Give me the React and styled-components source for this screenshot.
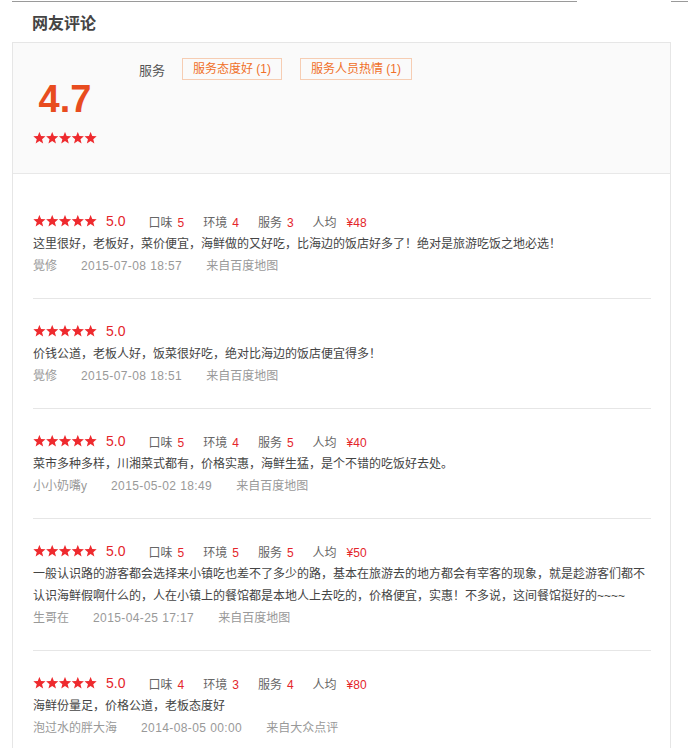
import React from "react";
import styled, { createGlobalStyle } from "styled-components";

const GlobalStyle = createGlobalStyle`
body {
  margin: 0;
  background: #ffffff;
  font-family: "Liberation Sans", "Noto Sans CJK SC", sans-serif;
  color: #333;
}
`

const Page = styled.div`
width: 688px;
height: 748px;
overflow: hidden;
`

const TopRules = styled.div`
display: flex;
justify-content: space-between;
padding: 1px 0 0 12px;
`

const Rule = styled.div`
height: 1px;
width: ${props => props.w}px;
background: #9a9a9a;
`

const Title = styled.h3`
margin: 0;
padding: 12px 0 0 32px;
height: 28px;
font-size: 16px;
line-height: 20px;
font-weight: bold;
color: #444;
`

const Panel = styled.div`
margin-left: 12px;
width: 657px;
border-left: 1px solid #e6e6e6;
border-right: 1px solid #e6e6e6;
border-top: 1px solid #e6e6e6;
`

const Summary = styled.div`
display: flex;
height: 130px;
background: #fafafa;
border-bottom: 1px solid #e8e8e8;
`

const ScoreBox = styled.div`
display: flex;
flex-direction: column;
align-items: center;
width: 64px;
margin-left: 20px;
`

const Score = styled.div`
margin-top: 36px;
font-size: 38px;
line-height: 40px;
font-weight: bold;
color: #e84c1f;
`

const ScoreStars = styled.div`
margin-top: 13px;
display: flex;
`

const TagRow = styled.div`
display: flex;
align-items: center;
margin: 15px 0 0 42px;
height: 22px;
`

const TagLabel = styled.span`
font-size: 13px;
color: #555;
margin-right: 17px;
`

const Tag = styled.span`
display: inline-block;
height: 20px;
line-height: 20px;
padding: 0 10px;
border: 1px solid #f6cdb3;
font-size: 12px;
color: #f07028;
margin-right: 18px;
`

const ReviewList = styled.div`
padding: 15px 19px 0 20px;
`

const Review = styled.div`
padding: 20px 0 21px;
border-bottom: ${props => props.last ? "none" : "1px solid #e6e6e6"};
`

const RatingRow = styled.div`
display: flex;
align-items: center;
height: 24px;
`

const Overall = styled.span`
margin-left: 9px;
font-size: 14px;
color: #e4252b;
`

const Details = styled.div`
display: flex;
margin-left: 23px;
font-size: 12px;
color: #666;
`

const Detail = styled.span`
margin-right: 19px;
b {
  font-weight: normal;
  color: #e4252b;
  margin-left: ${props => props.price ? 10 : 5}px;
}
`

const Content = styled.p`
margin: 0;
font-size: 12px;
line-height: 22px;
color: #444;
`

const Meta = styled.div`
display: flex;
gap: 24px;
font-size: 12px;
line-height: 22px;
color: #999;
`

const Time = styled.span`
letter-spacing: 0.4px;
`

const Stars = ({ size = 12.8, color = "#ee2a2e" }) => {
    const pts = (cx) => {
        const out = [];
        for (let i = 0; i < 10; i++) {
            const r = i % 2 === 0 ? size / 2 : size / 4.6;
            const a = -Math.PI / 2 + (i * Math.PI) / 5;
            out.push(`${(cx + r * Math.cos(a)).toFixed(2)},${(6.3 + r * Math.sin(a)).toFixed(2)}`);
        }
        return out.join(" ");
    };
    return (
        <svg width={size * 5} height="12" viewBox={`0 0 ${size * 5} 12`}>
            {[0, 1, 2, 3, 4].map(i => (
                <polygon key={i} points={pts(size / 2 + i * size)} fill={color} />
            ))}
        </svg>
    );
};

const reviews = [
    {
        details: [["口味", "5"], ["环境", "4"], ["服务", "3"]],
        price: "¥48",
        text: "这里很好，老板好，菜价便宜，海鲜做的又好吃，比海边的饭店好多了！绝对是旅游吃饭之地必选！",
        name: "覺修",
        time: "2015-07-08 18:57",
        from: "来自百度地图"
    },
    {
        details: null,
        text: "价钱公道，老板人好，饭菜很好吃，绝对比海边的饭店便宜得多！",
        name: "覺修",
        time: "2015-07-08 18:51",
        from: "来自百度地图"
    },
    {
        details: [["口味", "5"], ["环境", "4"], ["服务", "5"]],
        price: "¥40",
        text: "菜市多种多样，川湘菜式都有，价格实惠，海鲜生猛，是个不错的吃饭好去处。",
        name: "小小奶嘴y",
        time: "2015-05-02 18:49",
        from: "来自百度地图"
    },
    {
        details: [["口味", "5"], ["环境", "5"], ["服务", "5"]],
        price: "¥50",
        text: "一般认识路的游客都会选择来小镇吃也差不了多少的路，基本在旅游去的地方都会有宰客的现象，就是趁游客们都不认识海鲜假啊什么的，人在小镇上的餐馆都是本地人上去吃的，价格便宜，实惠！不多说，这间餐馆挺好的~~~~",
        name: "生哥在",
        time: "2015-04-25 17:17",
        from: "来自百度地图"
    },
    {
        details: [["口味", "4"], ["环境", "3"], ["服务", "4"]],
        price: "¥80",
        text: "海鲜份量足，价格公道，老板态度好",
        name: "泡过水的胖大海",
        time: "2014-08-05 00:00",
        from: "来自大众点评"
    }
];

const App = () => {
    return (
        <Page>
            <GlobalStyle />
            <TopRules>
                <Rule w={565} />
                <Rule w={17} />
            </TopRules>
            <Title>网友评论</Title>
            <Panel>
                <Summary>
                    <ScoreBox>
                        <Score>4.7</Score>
                        <ScoreStars><Stars /></ScoreStars>
                    </ScoreBox>
                    <TagRow>
                        <TagLabel>服务</TagLabel>
                        <Tag>服务态度好 (1)</Tag>
                        <Tag>服务人员热情 (1)</Tag>
                    </TagRow>
                </Summary>
                <ReviewList>
                    {reviews.map((r, i) => (
                        <Review key={i} last={i === reviews.length - 1}>
                            <RatingRow>
                                <Stars />
                                <Overall>5.0</Overall>
                                {r.details && (
                                    <Details>
                                        {r.details.map(([k, v]) => (
                                            <Detail key={k}>{k}<b>{v}</b></Detail>
                                        ))}
                                        <Detail price>人均<b>{r.price}</b></Detail>
                                    </Details>
                                )}
                            </RatingRow>
                            <Content>{r.text}</Content>
                            <Meta>
                                <span>{r.name}</span>
                                <Time>{r.time}</Time>
                                <span>{r.from}</span>
                            </Meta>
                        </Review>
                    ))}
                </ReviewList>
            </Panel>
        </Page>
    );
};

export default App;
